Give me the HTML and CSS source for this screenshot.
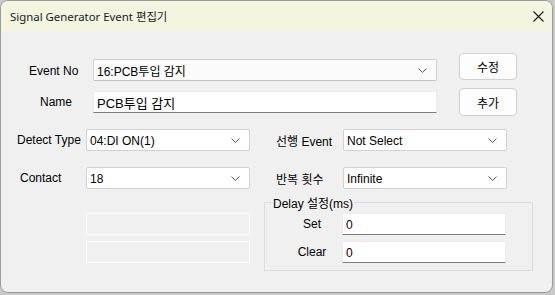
FILE: index.html
```html
<!DOCTYPE html>
<html lang="ko">

<head>
  <link rel="stylesheet" href="styles.css">
</head>

<body>
  <div class="window">
    <div class="titlebar">
      <span class="title">Signal Generator Event 편집기</span>
      <span class="close">
        <svg width="11" height="11" viewBox="0 0 11 11">
          <path d="M0.5 0.5 L10.5 10.5 M10.5 0.5 L0.5 10.5" stroke="#1a1a1a" stroke-width="1.1" fill="none"/>
        </svg>
      </span>
    </div>

    <div class="content">
      <div class="top-grid">
        <label class="lbl lbl-event">Event No</label>
        <div class="combo combo-event">
          <span>16:PCB투입 감지</span>
          <svg class="chev" width="9" height="5" viewBox="0 0 9 5"><path d="M0.5 0.5 L4.5 4.5 L8.5 0.5" stroke="#606060" fill="none"/></svg>
        </div>
        <div></div>
        <button class="btn btn-edit">수정</button>

        <label class="lbl lbl-name">Name</label>
        <div class="textbox textbox-name">PCB투입 감지</div>
        <div></div>
        <button class="btn btn-add">추가</button>
      </div>

      <div class="mid-grid">
        <label class="lbl lbl-detect">Detect Type</label>
        <div class="combo">
          <span>04:DI ON(1)</span>
          <svg class="chev" width="9" height="5" viewBox="0 0 9 5"><path d="M0.5 0.5 L4.5 4.5 L8.5 0.5" stroke="#606060" fill="none"/></svg>
        </div>
        <label class="lbl lbl-right">선행 Event</label>
        <div class="combo">
          <span>Not Select</span>
          <svg class="chev" width="9" height="5" viewBox="0 0 9 5"><path d="M0.5 0.5 L4.5 4.5 L8.5 0.5" stroke="#606060" fill="none"/></svg>
        </div>

        <label class="lbl lbl-contact">Contact</label>
        <div class="combo">
          <span>18</span>
          <svg class="chev" width="9" height="5" viewBox="0 0 9 5"><path d="M0.5 0.5 L4.5 4.5 L8.5 0.5" stroke="#606060" fill="none"/></svg>
        </div>
        <label class="lbl lbl-right">반복 횟수</label>
        <div class="combo">
          <span>Infinite</span>
          <svg class="chev" width="9" height="5" viewBox="0 0 9 5"><path d="M0.5 0.5 L4.5 4.5 L8.5 0.5" stroke="#606060" fill="none"/></svg>
        </div>
      </div>

      <div class="bottom-row">
        <div class="disabled-boxes">
          <div class="disabled-box"></div>
          <div class="disabled-box"></div>
        </div>

        <fieldset class="group">
          <legend>Delay 설정(ms)</legend>
          <div class="group-grid">
            <label class="lbl lbl-center">Set</label>
            <div class="textbox">0</div>
            <label class="lbl lbl-center">Clear</label>
            <div class="textbox">0</div>
          </div>
        </fieldset>
      </div>
    </div>
  </div>
</body>

</html>
```

FILE: styles.css
```css
body {
  margin: 0;
  background-color: #c9c9c9;
  font-family: 'Liberation Sans', 'Noto Sans CJK KR', sans-serif;
  font-size: 12px;
  color: #000;
}

.window {
  width: 553px;
  height: 293px;
  box-sizing: border-box;
  border: 1px solid #9c9c9c;
  border-radius: 8px;
  overflow: hidden;
  background-color: #f0f0f0;
}

.titlebar {
  height: 30px;
  display: flex;
  align-items: center;
  justify-content: space-between;
  padding: 0 9px 0 9px;
  background-color: #f3f5e1;
}

.title {
  font-family: 'Noto Sans', 'Noto Sans CJK KR', sans-serif;
  font-size: 11.4px;
  color: #1a1a1a;
}

.close {
  display: flex;
  margin-right: -1px;
}

.content {
  padding-top: 22px;
}

.lbl {
  align-self: center;
  white-space: nowrap;
}

/* top: event number, name, buttons */
.top-grid {
  display: grid;
  grid-template-columns: 92px 344px 22px 58px;
  grid-template-rows: 28px 28px;
  row-gap: 7px;
}

.lbl-event {
  padding-left: 28px;
  align-self: end;
  padding-bottom: 3px;
}

.lbl-name {
  padding-left: 39px;
}

.combo {
  display: flex;
  align-items: center;
  justify-content: space-between;
  height: 22px;
  box-sizing: border-box;
  padding: 0 9px 0 3px;
  background-color: #fff;
  border: 1px solid #d2d2d2;
  border-radius: 2px;
  white-space: nowrap;
}

.combo-event {
  align-self: end;
  background-color: #fbfbfb;
  border-bottom-color: #c4c4c4;
}

.combo span {
  padding-top: 1px;
}

.textbox {
  height: 22px;
  box-sizing: border-box;
  padding: 2px 3px 0 3px;
  background-color: #fff;
  border: 1px solid #ececec;
  border-bottom: 1px solid #7d7d7d;
  display: flex;
  align-items: center;
}

.textbox-name {
  align-self: center;
  font-size: 13px;
  padding-top: 0;
}

.btn {
  font-family: 'Liberation Sans', 'Noto Sans CJK KR', sans-serif;
  font-size: 12px;
  color: #000;
  background-color: #fdfdfd;
  border: 1px solid #d0d0d0;
  border-radius: 4px;
  padding: 0;
}

.btn-edit {
  height: 27px;
  align-self: start;
}

.btn-add {
  height: 28px;
}

/* middle: detect type, contact, previous event, repeat */
.mid-grid {
  display: grid;
  grid-template-columns: 85px 164px 93px 164px;
  grid-template-rows: 22px 22px;
  row-gap: 16px;
  margin-top: 13px;
}

.lbl-detect {
  padding-left: 16px;
}

.lbl-contact {
  padding-left: 19px;
}

.lbl-right {
  padding-left: 26px;
}

/* bottom: disabled boxes and delay group */
.bottom-row {
  display: flex;
  margin-top: 5px;
}

.disabled-boxes {
  width: 178px;
  padding-left: 85px;
  padding-top: 19px;
  display: flex;
  flex-direction: column;
  gap: 6px;
}

.disabled-box {
  width: 164px;
  height: 22px;
  box-sizing: border-box;
  border: 1px solid #fbfbfb;
}

.group {
  width: 269px;
  height: 77px;
  box-sizing: border-box;
  margin: 0;
  padding: 0;
  border: 1px solid #dcdcdc;
  border-radius: 0;
}

.group legend {
  margin-left: 7px;
  padding: 0 1px;
  font-size: 12px;
}

.group-grid {
  display: grid;
  grid-template-columns: 60px 164px;
  grid-template-rows: 22px 22px;
  row-gap: 6px;
  padding-left: 17px;
  padding-top: 2px;
}

.lbl-center {
  text-align: center;
}
```
